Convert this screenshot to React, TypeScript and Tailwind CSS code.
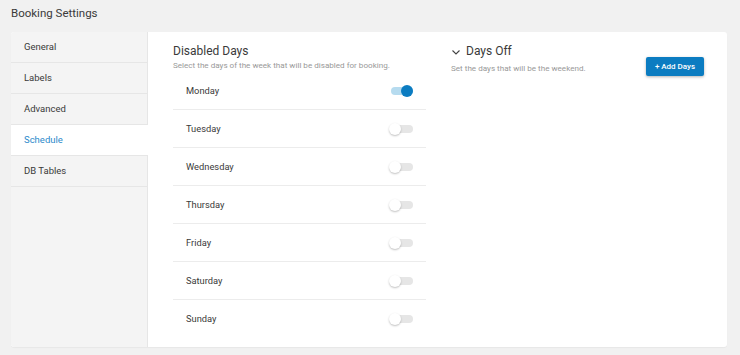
import { useState } from "react";

const menu = ["General", "Labels", "Advanced", "Schedule", "DB Tables"];
const days = ["Monday", "Tuesday", "Wednesday", "Thursday", "Friday", "Saturday", "Sunday"];

function Toggle({ on, onClick }: { on: boolean; onClick: () => void }) {
	return (
		<button onClick={onClick} className="relative h-[12px] w-[24px] shrink-0">
			<span
				className={`absolute left-[2px] right-0 top-[2px] h-[8px] rounded-full ${on ? "bg-[#b6dbef]" : "bg-[#e6e6e6]"}`}
			/>
			<span
				className={`absolute top-0 h-[12px] w-[12px] rounded-full ${
					on ? "right-0 bg-[#0b7cc1]" : "left-0 bg-white shadow-[0_1px_2px_rgba(0,0,0,0.25)]"
				}`}
			/>
		</button>
	);
}

export default function App() {
	const [active, setActive] = useState("Schedule");
	const [disabled, setDisabled] = useState<Record<string, boolean>>({ Monday: true });

	return (
		<div className="min-h-[355px] bg-[#f1f1f1] pb-[8px] pl-[11px] pr-[13px] font-['Roboto',sans-serif] text-[#3a3a3a]">
			<h1 className="flex h-[32px] items-center pb-[5px] text-[11.5px] text-[#3a3a3a]">Booking Settings</h1>
			<div className="flex h-[315px] overflow-hidden rounded-[3px] bg-white shadow-[0_1px_1px_rgba(0,0,0,0.04)]">
				<div className="w-[137px] shrink-0 border-r border-[#e6e6e6] bg-[#f4f4f4]">
					{menu.map((item) => (
						<div
							key={item}
							onClick={() => setActive(item)}
							className={`flex h-[31px] cursor-pointer items-center border-b border-[#e6e6e6] pl-[13px] pt-[1px] text-[9.5px] ${
								active === item ? "mr-[-1px] bg-white text-[#2b8acb]" : "text-[#3a3a3a]"
							}`}
						>
							{item}
						</div>
					))}
				</div>
				<div className="flex flex-1 gap-[25px] pl-[25px] pt-[12px]">
					<div className="w-[253px]">
						<h2 className="text-[12px] leading-[15px] text-[#3a3a3a]">Disabled Days</h2>
						<p className="mt-[1px] text-[8.1px] leading-[10px] text-[#999]">
							Select the days of the week that will be disabled for booking.
						</p>
						<div className="mt-[2px]">
							{days.map((day, i) => (
								<div
									key={day}
									className={`flex h-[38px] items-center justify-between px-[13px] ${
										i < days.length - 1 ? "border-b border-[#ececec]" : ""
									}`}
								>
									<span className="text-[9.3px] text-[#3a3a3a]">{day}</span>
									<Toggle
										on={!!disabled[day]}
										onClick={() => setDisabled({ ...disabled, [day]: !disabled[day] })}
									/>
								</div>
							))}
						</div>
					</div>
					<div className="w-[253px]">
						<div className="flex items-center gap-[5px]">
							<svg width="10" height="10" viewBox="0 0 10 10" fill="none" stroke="#444" strokeWidth="1.1">
								<path d="M1.5 3.5 L5 7 L8.5 3.5" />
							</svg>
							<h2 className="text-[12px] leading-[15px] text-[#3a3a3a]">Days Off</h2>
						</div>
						<div className="mt-[4px] flex items-start justify-between">
							<p className="text-[8.1px] leading-[10px] text-[#999]">Set the days that will be the weekend.</p>
							<button className="mt-[-6px] flex h-[19px] w-[58px] items-center justify-center rounded-[2px] bg-[#0b7cc1] text-[8px] font-medium text-white shadow-[0_1px_3px_rgba(0,0,0,0.3)]">
								+ Add Days
							</button>
						</div>
					</div>
				</div>
			</div>
		</div>
	);
}
